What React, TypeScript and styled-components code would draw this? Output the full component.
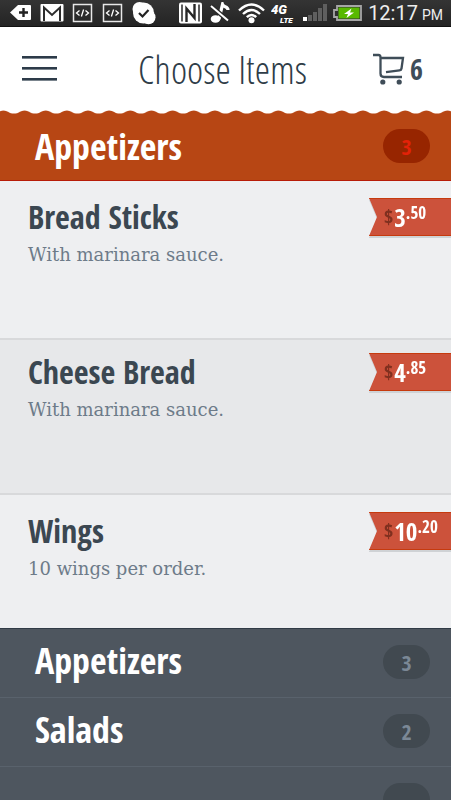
import React from 'react';
import styled, { createGlobalStyle } from 'styled-components';

const heavy = '"Open Sans Condensed", "Roboto Condensed", sans-serif';
const light = '"Open Sans Condensed Light", "Open Sans Condensed", "Roboto Condensed", sans-serif';

const GlobalStyle = createGlobalStyle`
  *, *::before, *::after { box-sizing: border-box; }
  html, body { margin: 0; padding: 0; }
  body { background: #4e565f; font-family: ${heavy}; }
  h1, h2, h3, p, ul { margin: 0; padding: 0; }
`;

const Screen = styled.div`
  height: 100vh;
  overflow: hidden;
  background: #4e565f;
`;

const StatusBar = styled.div`
  display: flex;
  justify-content: space-between;
  align-items: center;
  height: 27px;
  padding: 0 8px 0 10px;
  background: linear-gradient(#343434, #242424);
  border-bottom: 1px solid #111;
  color: #f4f4f4;
  svg { display: block; flex: none; }
`;

const StatusGroup = styled.div<{ $gap: number }>`
  display: flex;
  align-items: center;
  gap: ${p => p.$gap}px;
`;

const Clock = styled.time`
  padding-top: 2px;
  font: 400 20px/24px Roboto, sans-serif;
  white-space: nowrap;
  color: #ededed;
`;

const Meridiem = styled.small`
  margin-left: 4px;
  font-size: 14px;
`;

const Header = styled.header`
  display: grid;
  grid-template-columns: 56px 1fr 56px;
  align-items: center;
  height: 83px;
  padding: 0 28px 0 22px;
  background: #fff;
  color: #2f3d48;
`;

const MenuButton = styled.button`
  display: flex;
  flex-direction: column;
  gap: 8px;
  width: 35px;
  padding: 0;
  border: 0;
  background: none;
  cursor: pointer;
`;

const MenuLine = styled.span`
  height: 3px;
  background: #2d3b49;
  border-bottom: 1px solid #7b858e;
`;

const PageTitle = styled.h1`
  font: 300 39px/44px ${light};
  text-align: center;
  white-space: nowrap;
`;

const CartButton = styled.button`
  display: flex;
  align-items: center;
  justify-content: flex-end;
  gap: 5px;
  padding: 0;
  border: 0;
  background: none;
  color: #3f4d58;
  font: 500 28px/36px ${heavy};
  cursor: pointer;
  svg { display: block; flex: none; }
`;

const ScallopEdge = styled.svg`
  display: block;
  width: 100%;
  height: 4px;
  background: #fff;
`;

const Category = styled.button<{ $active?: boolean }>`
  display: flex;
  align-items: flex-start;
  justify-content: space-between;
  width: 100%;
  height: ${p => (p.$active ? 67 : 69)}px;
  padding: ${p => (p.$active ? 15 : 16)}px 21px 0 35px;
  border: 0;
  border-bottom: 1px solid ${p => (p.$active ? '#b71c08' : '#59626c')};
  background: ${p => (p.$active ? '#b74614' : '#4e565f')};
  color: #fff;
  font: 700 36px/${p => (p.$active ? 36 : 32)}px ${heavy};
  text-align: left;
  cursor: pointer;
`;

const Count = styled.span<{ $active?: boolean }>`
  width: 47px;
  height: 34px;
  border-radius: 17px;
  background: ${p => (p.$active ? '#972500' : '#414950')};
  color: ${p => (p.$active ? '#e32208' : '#7b8896')};
  font-size: 22px;
  line-height: 34px;
  text-align: center;
`;

const ItemList = styled.ul`
  list-style: none;
`;

const rowHeights = { tall: 159, compact: 155, short: 134 };

const Item = styled.li<{ $size: keyof typeof rowHeights }>`
  display: flex;
  justify-content: space-between;
  align-items: flex-start;
  min-height: ${p => rowHeights[p.$size]}px;
  padding: ${p => (p.$size === 'compact' ? 13 : 17)}px 0 0 28px;
  background: ${p => (p.$size === 'compact' ? '#e7e8ea' : '#eeeff1')};
  border-bottom: ${p => (p.$size === 'short' ? '1px solid #303b46' : '2px solid #d8d9db')};
`;

const ItemName = styled.h3`
  font: 700 32px/38px ${heavy};
  color: #3b4751;
`;

const ItemNote = styled.p`
  font: 400 18px/38px "DejaVu Serif", serif;
  color: #6d7b89;
`;

const RibbonShadow = styled.div`
  filter: drop-shadow(0 2px 0 #cfd2d5);
`;

const Ribbon = styled.div`
  display: flex;
  width: 82px;
  height: 38px;
  padding-left: 15px;
  background: #cc523b;
  border-top: 1px solid #c63a0e;
  border-bottom: 1px solid #c63a0e;
  clip-path: polygon(0 0, 100% 0, 100% 100%, 0 100%, 8px 50%);
  color: #fff;
  font: 700 25px/36px ${heavy};
`;

const Currency = styled.span`
  margin-right: 1px;
  font-size: 20px;
  color: #80301f;
`;

const Cents = styled.span`
  font-size: 17px;
  line-height: 28px;
`;

const BackTagIcon = () => (
  <svg width="22" height="18" viewBox="0 0 22 18">
    <path d="M8 1h12q1 0 1 1v13q0 1-1 1H8L0 8.500z" fill="#fff" />
    <path d="M13.500 4v9M9 8.500h9" stroke="#222" strokeWidth="2.400" />
  </svg>
);

const MailIcon = () => (
  <svg width="24" height="20" viewBox="0 0 24 20">
    <rect x="0.500" y="1" width="23" height="17.500" rx="1" fill="#fff" />
    <path d="M4 18V4.500L12 12l8-7.500V18" fill="none" stroke="#2c2c2c" strokeWidth="2" />
  </svg>
);

const CodeIcon = () => (
  <svg width="22" height="20" viewBox="0 0 22 20">
    <rect x="1.500" y="1.500" width="18" height="17" fill="none" stroke="#e8e8e8" strokeWidth="1.500" />
    <path d="M7.500 7.500l-3 2.500 3 2.500M13.500 7.500l3 2.500-3 2.500M11.600 6.500L9.400 13.500" fill="none" stroke="#fff" strokeWidth="1.300" />
  </svg>
);

const CheckBubbleIcon = () => (
  <svg width="24" height="24" viewBox="0 0 24 24">
    <circle cx="11.500" cy="12" r="10.500" fill="#fff" />
    <circle cx="7.500" cy="8" r="7" fill="#fff" />
    <circle cx="16.500" cy="16.200" r="7" fill="#fff" />
    <path d="M7 12l3.500 3.500 6-6.500" fill="none" stroke="#222" strokeWidth="2.200" />
  </svg>
);

const NfcIcon = () => (
  <svg width="23" height="22" viewBox="0 0 23 22">
    <rect x="0" y="0.500" width="23" height="21" rx="2" fill="#fff" />
    <path d="M3 2.500v17M20 19.500v-17" fill="none" stroke="#282828" strokeWidth="1.500" />
    <path d="M7.500 20V6.500L15.500 16V2" fill="none" stroke="#282828" strokeWidth="2.400" />
  </svg>
);

const MutedNoteIcon = () => (
  <svg width="24" height="22" viewBox="0 0 24 22">
    <ellipse cx="7.500" cy="17" rx="4.800" ry="3.800" fill="#fff" />
    <path d="M11 17L14.500 2.500c1 3 5.500 1.500 5.500 5.500" fill="none" stroke="#fff" strokeWidth="3.200" />
    <path d="M3 4l17 14.500" stroke="#292929" strokeWidth="4.500" />
    <path d="M3 4l17 14.500" stroke="#fff" strokeWidth="2" />
  </svg>
);

const WifiIcon = () => (
  <svg width="27" height="22" viewBox="0 0 27 22">
    <circle cx="13.500" cy="18.300" r="3" fill="#fff" />
    <path d="M1 8.500q12.500-12 25 0M5 12q8.500-8 17 0M8.800 15.200q4.700-4.600 9.400 0" fill="none" stroke="#fff" strokeWidth="2.400" />
  </svg>
);

const NetworkIcon = () => (
  <svg width="26" height="26" viewBox="0 0 26 26" fill="#fff" fontFamily="Roboto, sans-serif" fontStyle="italic" fontWeight="900">
    <text x="0" y="14" fontSize="13">4G</text>
    <text x="9" y="23" fontSize="8">LTE</text>
  </svg>
);

const SignalIcon = () => (
  <svg width="24" height="18" viewBox="0 0 24 18">
    <rect x="0" y="13" width="4" height="4" fill="#fff" />
    <path d="M5 11h4v6H5zM10 8h4v9h-4zM15 4h4v13h-4zM20 0h4v17h-4z" fill="#5f5f5f" />
  </svg>
);

const BatteryIcon = () => (
  <svg width="29" height="16" viewBox="0 0 29 16">
    <path d="M4 1h24v14H4v-3H1V5h3z" fill="#303030" stroke="#a6a6a6" strokeWidth="1.800" />
    <rect x="5.500" y="2.500" width="21" height="11" fill="#58b900" />
    <path d="M18.500 3.500L11 9h4l-1.500 4L21 7.500h-4z" fill="#fff" />
  </svg>
);

const CartIcon = () => (
  <svg width="32" height="32" viewBox="0 0 32 32" fill="none" stroke="#3f4d58" strokeWidth="2.300">
    <path d="M0 2h5.500q2 0 2 2.500v16q0 3.500 3.500 3.500h18M7.500 5h22.500l-1.500 10.500q-.2 1.600-2 1.800L13 19.200" />
    <circle cx="9.800" cy="29" r="2.600" fill="#3f4d58" stroke="none" />
    <circle cx="26.200" cy="29" r="2.600" fill="#3f4d58" stroke="none" />
  </svg>
);

const items = [
  { name: 'Bread Sticks', note: 'With marinara sauce.', whole: '3', cents: '.50', size: 'tall' as const },
  { name: 'Cheese Bread', note: 'With marinara sauce.', whole: '4', cents: '.85', size: 'compact' as const },
  { name: 'Wings', note: '10 wings per order.', whole: '10', cents: '.20', size: 'short' as const },
];

const categories = [
  { id: 'appetizers', name: 'Appetizers', count: '3' },
  { id: 'salads', name: 'Salads', count: '2' },
  { id: 'more', name: '', count: '' },
];

export default function App() {
  return (
    <Screen>
      <GlobalStyle />
      <StatusBar>
        <StatusGroup $gap={8}>
          <BackTagIcon />
          <MailIcon />
          <CodeIcon />
          <CodeIcon />
          <CheckBubbleIcon />
        </StatusGroup>
        <StatusGroup $gap={6}>
          <NfcIcon />
          <MutedNoteIcon />
          <WifiIcon />
          <NetworkIcon />
          <SignalIcon />
          <BatteryIcon />
          <Clock>12:17<Meridiem>PM</Meridiem></Clock>
        </StatusGroup>
      </StatusBar>
      <Header>
        <MenuButton aria-label="Menu"><MenuLine /><MenuLine /><MenuLine /></MenuButton>
        <PageTitle>Choose Items</PageTitle>
        <CartButton aria-label="Cart, 6 items"><CartIcon />6</CartButton>
      </Header>
      <ScallopEdge aria-hidden="true">
        <defs>
          <pattern id="scallop" x="3.400" width="21.150" height="4" patternUnits="userSpaceOnUse">
            <path d="M0 .4C4 .4 6 3.600 10.580 3.600S17.150 .4 21.150 .4V4H0z" fill="#b74614" />
          </pattern>
        </defs>
        <rect width="100%" height="4" fill="url(#scallop)" />
      </ScallopEdge>
      <Category $active>Appetizers<Count $active>3</Count></Category>
      <ItemList>
        {items.map(item => (
          <Item key={item.name} $size={item.size}>
            <div>
              <ItemName>{item.name}</ItemName>
              <ItemNote>{item.note}</ItemNote>
            </div>
            <RibbonShadow>
              <Ribbon>
                <Currency>$</Currency>
                <span>{item.whole}</span>
                <Cents>{item.cents}</Cents>
              </Ribbon>
            </RibbonShadow>
          </Item>
        ))}
      </ItemList>
      {categories.map(c => (
        <Category key={c.id} aria-label={c.name || 'More'}>
          <span>{c.name}</span>
          <Count>{c.count}</Count>
        </Category>
      ))}
    </Screen>
  );
}
